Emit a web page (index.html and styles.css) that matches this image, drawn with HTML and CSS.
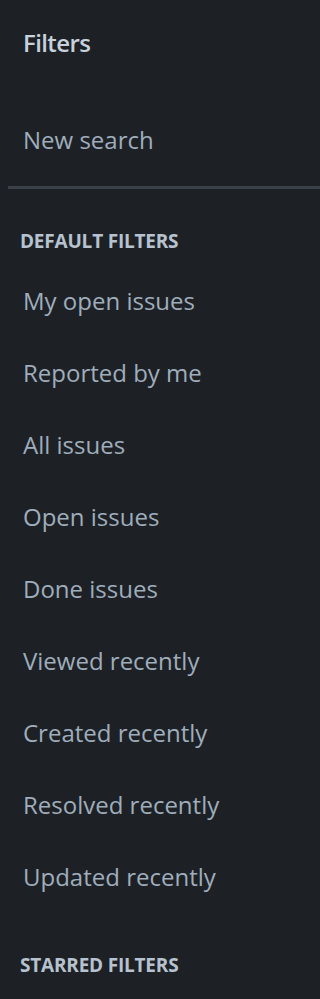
FILE: index.html
```html
<!DOCTYPE html>
<html lang="en">
<head>
<meta charset="utf-8">
<title>Filters</title>
<link rel="stylesheet" href="styles.css">
</head>
<body>
<aside class="sidebar">
  <h2 class="title">Filters</h2>
  <a class="item item-new" href="#">New search</a>
  <hr class="divider">
  <h3 class="section section-default">DEFAULT FILTERS</h3>
  <ul class="list">
    <li><a class="item" href="#">My open issues</a></li>
    <li><a class="item" href="#">Reported by me</a></li>
    <li><a class="item" href="#">All issues</a></li>
    <li><a class="item" href="#">Open issues</a></li>
    <li><a class="item" href="#">Done issues</a></li>
    <li><a class="item" href="#">Viewed recently</a></li>
    <li><a class="item" href="#">Created recently</a></li>
    <li><a class="item" href="#">Resolved recently</a></li>
    <li><a class="item" href="#">Updated recently</a></li>
  </ul>
  <h3 class="section section-starred">STARRED FILTERS</h3>
</aside>
</body>
</html>
```

FILE: styles.css
```css
html, body {
  margin: 0;
  padding: 0;
  background: #1d2125;
}
body {
  font-family: "Open Sans", "Noto Sans", sans-serif;
  color: #9fadbc;
  min-height: 999px;
}
.sidebar {
  display: flex;
  flex-direction: column;
  padding-top: 23px;
}
.title {
  margin: 0 0 0 23px;
  font-size: 24px;
  line-height: 40px;
  font-weight: 600;
  letter-spacing: -0.6px;
  color: #c7d1db;
}
.item {
  display: block;
  height: 72px;
  line-height: 72px;
  padding-left: 23px;
  font-size: 24px;
  color: #9fadbc;
  text-decoration: none;
  white-space: nowrap;
}
.item-new {
  margin-top: 41px;
}
.divider {
  margin: 10px 0 0 8px;
  border: 0;
  height: 3px;
  background: #394047;
}
.section {
  margin: 0;
  padding-left: 20px;
  font-size: 19px;
  line-height: 30px;
  font-weight: 700;
  letter-spacing: -0.2px;
  color: #b6c2cf;
}
.section-default {
  margin-top: 37px;
}
.section-starred {
  margin-top: 37px;
}
.list {
  list-style: none;
  margin: 9px 0 0;
  padding: 0;
}
```
